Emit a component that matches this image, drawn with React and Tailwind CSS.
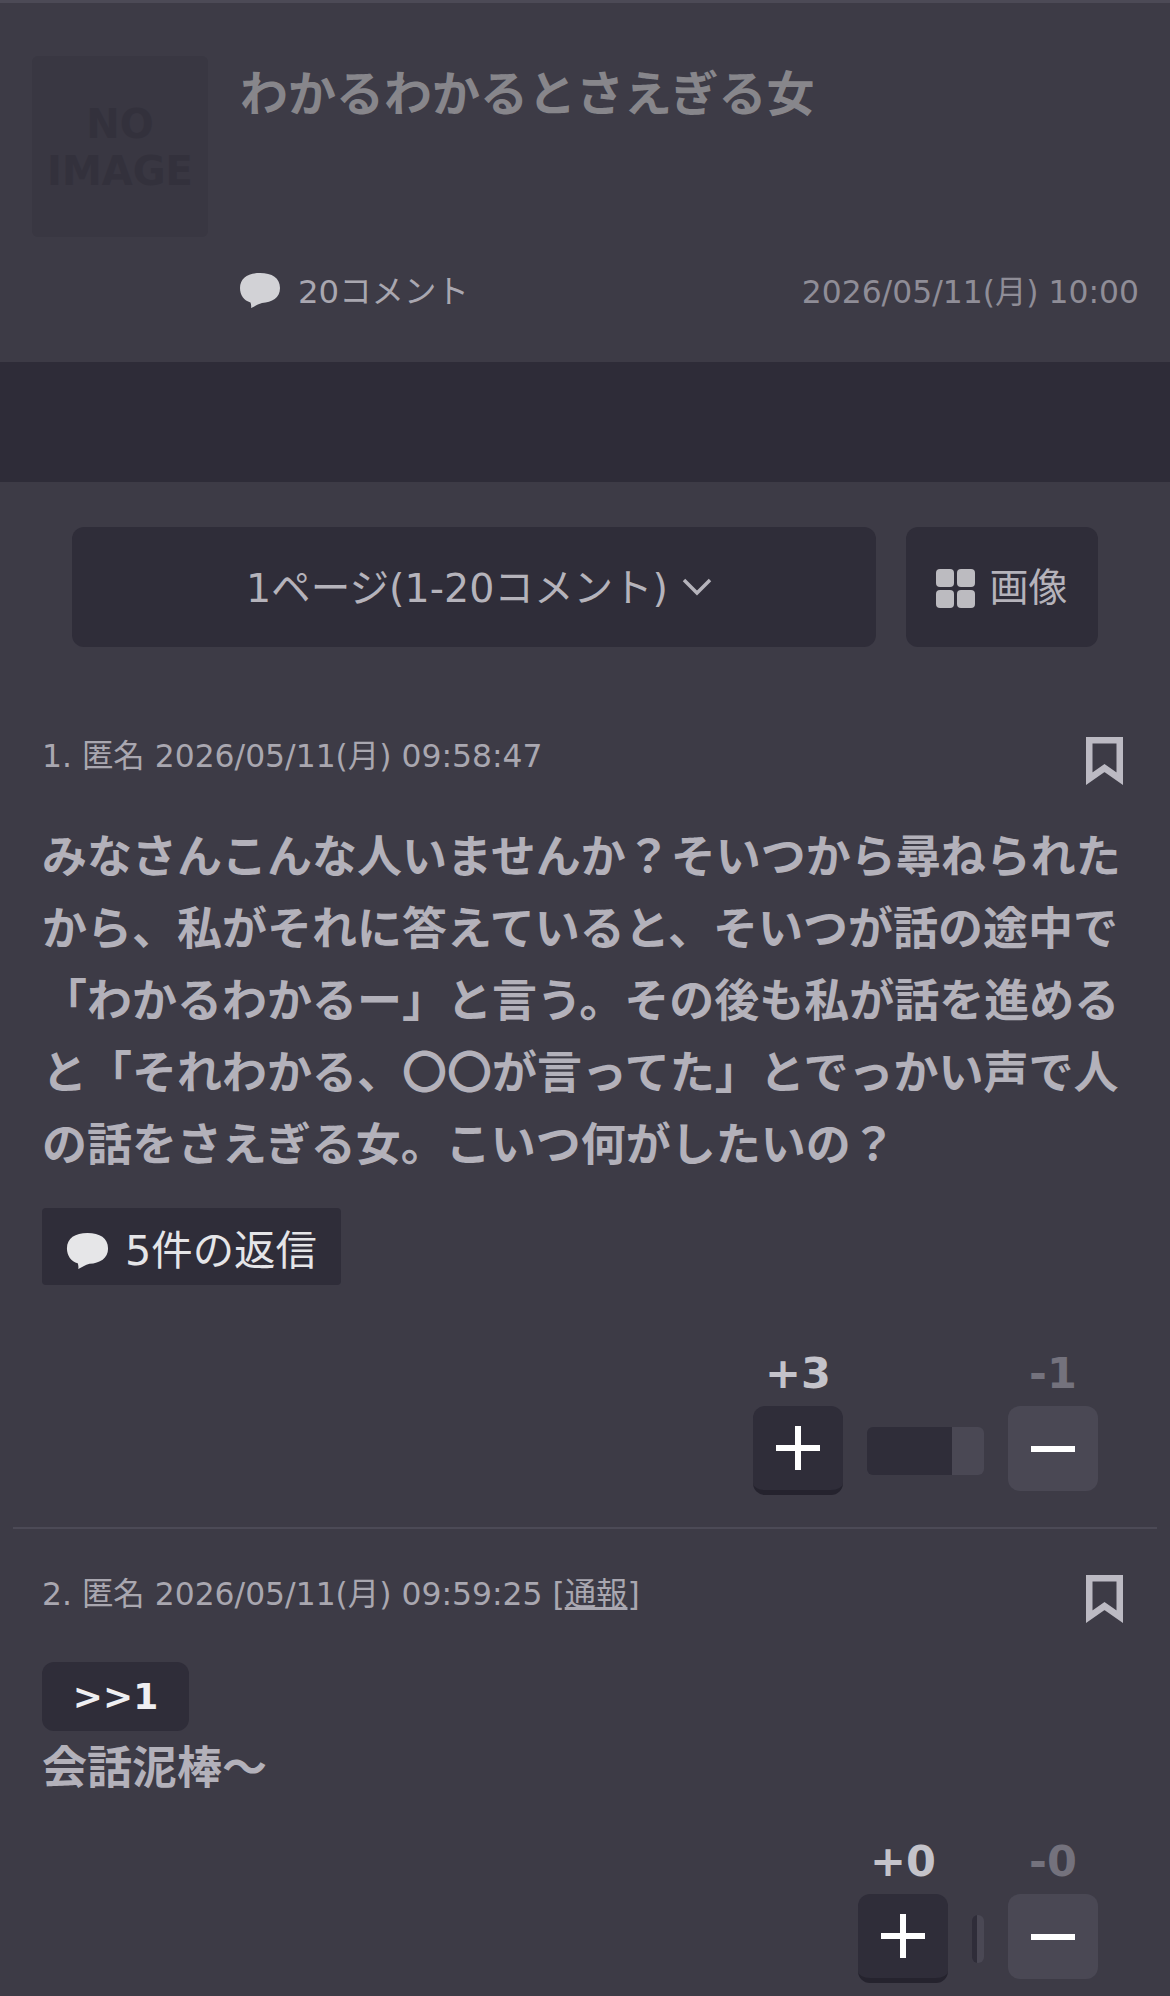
import React from 'react';

const Bubble = ({ className }) => (
  <svg viewBox="0 0 40 36" className={className} fill="currentColor">
    <path d="M20 0C32 0 40 5 40 15C40 25 32 29 22 30C18 31 14 34 11 35C11.500 33 11 31 10.500 29.500C4 27.500 0 22 0 15C0 5 8 0 20 0z" />
  </svg>
);

const Bookmark = () => (
  <svg viewBox="0 0 37 48" className="w-[37px] h-[48px] text-[#bcbac3]" fill="none" stroke="currentColor" strokeWidth="6.500">
    <path d="M3.250 3.250h30.500v38.500L18.500 31 3.250 41.750z" />
  </svg>
);

const VoteButton = ({ type }) => (
  <button className={`w-[90px] rounded-[12px] flex items-center justify-center ${type === 'plus' ? 'h-[89px] bg-[#2f2d39] border-b-[5px] border-[#25232e]' : 'h-[85px] bg-[#4a4854]'}`}>
    <svg viewBox="0 0 44 44" className="w-[44px] h-[44px]" fill="#ffffff">
      {type === 'plus' && <rect x="19" y="0" width="6" height="44" />}
      <rect x="0" y="19" width="44" height="6" />
    </svg>
  </button>
);

const Votes = ({ plus, minus, good, bad }) => (
  <div className="flex justify-end items-start gap-[24px] pr-[72px]">
    <div className="flex flex-col items-center w-[90px]">
      <span className="text-[43px] leading-[46px] font-bold text-[#c4c3ca] mb-[10px]">{plus}</span>
      <VoteButton type="plus" />
    </div>
    <div className="flex h-[48px] mt-[77px] rounded-[6px] overflow-hidden">
      <div className="h-full bg-[#2f2d39]" style={{ width: good }} />
      <div className="h-full bg-[#4a4854]" style={{ width: bad }} />
    </div>
    <div className="flex flex-col items-center w-[90px]">
      <span className="text-[43px] leading-[46px] font-bold text-[#74727d] mb-[10px]">{minus}</span>
      <VoteButton type="minus" />
    </div>
  </div>
);

const PostMeta = ({ children }) => (
  <div className="flex justify-between items-start pl-[42px] pr-[47px]">
    <div className="text-[31.4px] leading-[38px] text-[#a9a7b0]">{children}</div>
    <Bookmark />
  </div>
);

export default function App() {
  return (
    <div className="h-[1996px] overflow-hidden bg-[#3d3b46] font-['DejaVu_Sans','Noto_Sans_CJK_JP',sans-serif]">
      <header className="h-[362px] border-t-[3px] border-[#4c4a56] pt-[52px] pl-[32px] pr-[31px]">
        <div className="flex">
          <div className="w-[176px] h-[181px] mt-[1px] pt-[3px] shrink-0 rounded-[6px] bg-[#393742] flex items-center justify-center text-center text-[40px] leading-[47px] font-bold text-[#33313c]">
            <div>NO<br />IMAGE</div>
          </div>
          <div className="flex-1 pl-[32px] pt-[3px]">
            <h1 className="text-[48px] leading-[72px] font-bold text-[#87868b]">わかるわかるとさえぎる女</h1>
            <div className="flex items-center justify-between mt-[142px]">
              <div className="flex items-center text-[32.4px] leading-[40px] text-[#a9a7b0]">
                <Bubble className="w-[40px] h-[36px] -mt-[2px] text-[#d2d2d6] mr-[18px]" />
                20コメント
              </div>
              <div className="text-[31.4px] leading-[40px] text-[#8f8d97]">2026/05/11(月) 10:00</div>
            </div>
          </div>
        </div>
      </header>

      <div className="h-[120px] bg-[#2e2c38]" />

      <div className="flex gap-[30px] pl-[72px] pr-[72px] mt-[45px]">
        <button className="flex-1 h-[120px] pt-[3px] pl-[10px] rounded-[12px] bg-[#2f2d39] flex items-center justify-center gap-[14px] text-[39.6px] text-[#b5b3bb]">
          1ページ(1-20コメント)
          <svg viewBox="0 0 30 18" className="w-[30px] h-[18px] -mt-[3px]" fill="none" stroke="currentColor" strokeWidth="3.500">
            <path d="M2 2l13 13L28 2" />
          </svg>
        </button>
        <button className="w-[192px] h-[120px] pt-[2px] rounded-[12px] bg-[#2f2d39] flex items-center justify-center gap-[14px] text-[39px] text-[#b5b3bb]">
          <span className="grid grid-cols-2 gap-[3px]">
            <i className="w-[18px] h-[18px] rounded-[4px] bg-[#bcbbc0]" />
            <i className="w-[18px] h-[18px] rounded-[4px] bg-[#bcbbc0]" />
            <i className="w-[18px] h-[18px] rounded-[4px] bg-[#bcbbc0]" />
            <i className="w-[18px] h-[18px] rounded-[4px] bg-[#bcbbc0]" />
          </span>
          画像
        </button>
      </div>

      <article className="mt-[90px]">
        <PostMeta>1. 匿名 2026/05/11(月) 09:58:47</PostMeta>
        <p className="mt-[37px] px-[42px] text-[45px] leading-[72px] font-bold text-[#b3b1ba]">
          みなさんこんな人いませんか？そいつから尋ねられたから、私がそれに答えていると、そいつが話の途中で「わかるわかるー」と言う。その後も私が話を進めると「それわかる、〇〇が言ってた」とでっかい声で人の話をさえぎる女。こいつ何がしたいの？
        </p>
        <div className="px-[42px] mt-[26px]">
          <button className="w-[299px] h-[77px] pt-[9px] rounded-[4px] bg-[#2f2d39] flex items-center pl-[24px] text-[41.4px] text-[#e5e5e8]">
            <Bubble className="w-[43px] h-[37px] mr-[16px] text-[#e6e6e8]" />
            5件の返信
          </button>
        </div>
        <div className="mt-[65px]">
          <Votes plus="+3" minus="-1" good={85} bad={32} />
        </div>
      </article>

      <div className="h-[2px] mx-[13px] mt-[32px] bg-[#4c4a56]" />

      <article className="mt-[46px]">
        <PostMeta>
          2. 匿名 2026/05/11(月) 09:59:25 [<span className="underline">通報</span>]
        </PostMeta>
        <div className="px-[42px] mt-[39px]">
          <span className="flex items-center justify-center w-[147px] h-[69px] rounded-[12px] bg-[#2f2d39] text-[36px] font-bold text-[#efeff2]">&gt;&gt;1</span>
          <p className="mt-[2px] text-[45px] leading-[72px] font-bold text-[#b3b1ba]">会話泥棒〜</p>
        </div>
        <div className="mt-[33px]">
          <Votes plus="+0" minus="-0" good={5} bad={7} />
        </div>
      </article>
    </div>
  );
}
